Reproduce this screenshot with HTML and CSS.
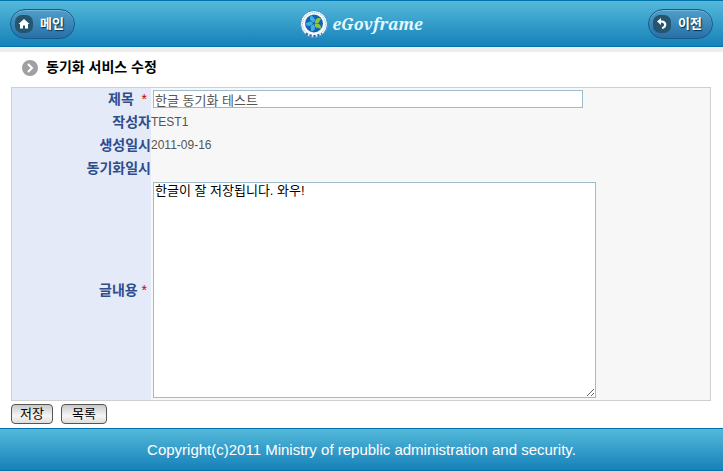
FILE: index.html
```html
<!DOCTYPE html>
<html lang="ko">
<head>
<meta charset="utf-8">
<title>동기화 서비스 수정</title>
<link rel="stylesheet" href="styles.css">
</head>
<body>
<header class="topbar">
  <a class="pill" href="#">
    <svg class="pill-icon" viewBox="0 0 18 18" aria-hidden="true"><rect class="disc" width="18" height="18" rx="7"/><path class="shape" d="M9 4 3.500 9H5v4.500h3V10.500h2v3h3V9h1.500z"/></svg>
    <span>메인</span>
  </a>
  <div class="brand">
    <svg class="emblem" viewBox="0 0 28 28" aria-hidden="true">
      <circle cx="14" cy="14" r="13.500" fill="#f4fbff" stroke="#3f8fc4"/>
      <circle cx="14" cy="14" r="11.500" fill="none" stroke="#8db9d8" stroke-dasharray="1 1"/>
      <circle cx="14" cy="13.500" r="9" fill="#1762ae"/>
      <g fill="#3db3e4">
        <path id="leaf" d="M14 12.500C9 11 9 7 12 5c0 3 5 3 2 7.500z"/>
        <use href="#leaf" transform="rotate(-72 14 13.500)"/>
        <use href="#leaf" transform="rotate(216 14 13.500)"/>
      </g>
      <g fill="#8cc63f">
        <use href="#leaf" transform="rotate(72 14 13.500)"/>
        <use href="#leaf" transform="rotate(144 14 13.500)"/>
      </g>
      <path d="M6 23.500q8 5 16 0" fill="none" stroke="#1c5fa5" stroke-width="2" stroke-dasharray="2 2"/>
    </svg>
    <span>eGovframe</span>
  </div>
  <a class="pill" href="#">
    <svg class="pill-icon" viewBox="0 0 18 18" aria-hidden="true"><rect class="disc" width="18" height="18" rx="7"/><path class="shape" d="M4 6.500 8 3v2.500c7-.5 7 8 1 8.500v-2c3-.5 3-4.500-1-4.500V10z"/></svg>
    <span>이전</span>
  </a>
</header>
<main>
  <h1 class="title">
    <svg class="bullet" viewBox="0 0 16 16" aria-hidden="true"><circle cx="8" cy="8" r="8" fill="#a0a0a0"/><path d="M6 4 10 8l-4 4" fill="none" stroke="#fff" stroke-width="2"/></svg>
    동기화 서비스 수정
  </h1>
  <form>
    <table class="detail">
      <tr><th scope="row"><label class="required" for="subject">제목 &nbsp;<em>*</em></label></th><td><input class="field" id="subject" type="text" value="한글 동기화 테스트"></td></tr>
      <tr><th scope="row">작성자</th><td>TEST1</td></tr>
      <tr><th scope="row">생성일시</th><td>2011-09-16</td></tr>
      <tr><th scope="row">동기화일시</th><td></td></tr>
      <tr><th scope="row"><label class="required" for="content">글내용 <em>*</em></label></th><td><textarea class="field content" id="content">한글이 잘 저장됩니다. 와우!</textarea></td></tr>
    </table>
    <div class="actions">
      <button class="save" type="button">저장</button>
      <button class="list" type="button">목록</button>
    </div>
  </form>
</main>
<footer class="footer">Copyright(c)2011 Ministry of republic administration and security.</footer>
</body>
</html>
```
FILE: styles.css
```css
* { box-sizing: border-box; }
body {
  margin: 0;
  background: #fff;
  color: #555;
  font: 12px/16px "Liberation Sans", "Noto Sans CJK KR", sans-serif;
}
.topbar, .footer {
  border: solid #0073ad;
  border-width: 1px 0;
  background: linear-gradient(#54b9da, #1681b9);
  color: #fff;
}
.topbar {
  display: flex;
  align-items: center;
  justify-content: space-between;
  height: 47px;
  padding: 0 10px;
  box-shadow: 0 5px #ededed;
}
.pill {
  display: flex;
  align-items: center;
  gap: 7px;
  height: 30px;
  padding: 0 10px 0 4px;
  border: 1px solid #125c89;
  border-radius: 15px;
  background: linear-gradient(#4f9fc9, #286fa8);
  box-shadow: inset 0 1px #78b5d6;
  color: #fff;
  font-size: 13px;
  font-weight: bold;
  text-decoration: none;
  text-shadow: 1px 1px 1px #0a2c42;
}
.pill-icon { width: 18px; height: 18px; }
.disc { fill: #23566f; }
.shape { fill: #fff; }
.brand {
  display: flex;
  align-items: center;
  gap: 4px;
  color: #e4f9ff;
  font: italic bold 16px/24px "Noto Serif", "DejaVu Serif", "Liberation Serif", serif;
}
.emblem { width: 28px; height: 28px; }
main { padding: 12px 12px 4px 11px; }
.title {
  display: flex;
  align-items: center;
  gap: 8px;
  margin: 0 0 11px;
  padding-left: 11px;
  color: #000;
  font-size: 14px;
  line-height: 17px;
}
.bullet { width: 16px; height: 16px; }
form { margin: 0; }
.detail {
  width: 100%;
  table-layout: fixed;
  border: 1px solid #d0d0d0;
  border-spacing: 0;
  background: #f7f7f7;
}
.detail th, .detail td { height: 23px; padding: 0; vertical-align: middle; }
.detail tr:first-child > * { height: 22px; }
.detail th {
  width: 139px;
  background: #e4eaf8;
  color: #2f4c8c;
  font-size: 14px;
  text-align: right;
}
.required { padding-right: 4px; }
.required em { color: #c00; font-style: normal; font-weight: normal; }
.field {
  display: block;
  width: 77%;
  height: 18px;
  margin: 0 2px;
  padding: 0 1px;
  border: 1px solid #9cbccd;
  border-radius: 0;
  background: #fff;
  color: #555;
  font: inherit;
  font-size: 13px;
}
.content {
  width: 443px;
  max-width: 99%;
  height: 216px;
  margin: 3px 2px 2px;
  color: #000;
}
.actions { display: flex; gap: 8px; margin-top: 3px; }
.actions button {
  height: 20px;
  border: 1px solid #555;
  border-radius: 4px;
  background: linear-gradient(#c9c9c9, #f5f5f5 60%, #ddd);
  color: #000;
  font: inherit;
  font-size: 13px;
}
.actions .save { padding: 0 8px; }
.actions .list { padding: 0 10px; }
.footer {
  height: 43px;
  font-size: 15px;
  line-height: 42px;
  text-align: center;
}
```
